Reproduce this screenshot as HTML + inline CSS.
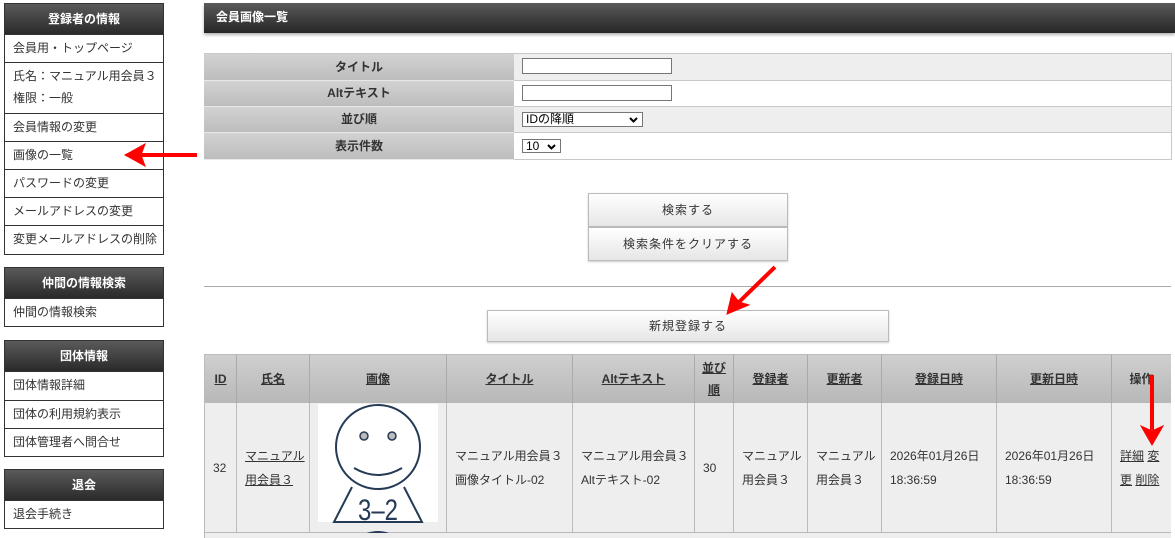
<!DOCTYPE html>
<html><head><meta charset="utf-8"><style>
*{box-sizing:border-box;margin:0;padding:0}
html,body{width:1175px;height:538px;overflow:hidden}
body{background:#fff;font-family:"Liberation Sans","Noto Sans CJK JP",sans-serif;font-size:12px;color:#333;position:relative}
.a{position:absolute}
.sh{position:absolute;left:4px;width:160px;background:linear-gradient(#5a5a5a,#2a2a2a);color:#fff;font-weight:bold;text-align:center;border:1px solid #333}
.si{position:absolute;left:4px;width:160px;border:1px solid #333;border-top:none;background:#fff;padding-left:8px}
.lab{position:absolute;left:204px;width:310px;background:linear-gradient(#d2d2d2,#bdbdbd);font-weight:bold;text-align:center;border-bottom:1px solid #e8e8e8}
.val{position:absolute;left:514px;width:658px;border:1px solid #c8c8c8;border-left:none;border-top:none}
.inp{position:absolute;background:#fff;border:1px solid #767676;height:16px}
.btn{position:absolute;background:linear-gradient(#fff,#e6e6e6);border:1px solid #bbb;text-align:center;letter-spacing:1px;box-shadow:0 1px 2px rgba(0,0,0,.2)}
.th{position:absolute;top:355px;height:48px;background:linear-gradient(#cfcfcf,#b8b8b8);border-right:1px solid #aaa;font-weight:bold;text-align:center;text-decoration:underline;line-height:48px}
.td{position:absolute;top:403px;height:130px;background:#eee;border-right:1px solid #bbb;border-bottom:1px solid #bbb;padding-left:8px;display:flex;align-items:center;line-height:24px}
u{text-decoration:underline}
</style></head><body>
<div class="sh" style="top:3px;height:32px;line-height:30px">登録者の情報</div>
<div class="si" style="top:35px;height:28px;line-height:27px">会員用・トップページ</div>
<div class="si" style="top:63px;height:51px;line-height:22px;padding-top:2px">氏名：マニュアル用会員３<br>権限：一般</div>
<div class="si" style="top:114px;height:28px;line-height:27px">会員情報の変更</div>
<div class="si" style="top:142px;height:28px;line-height:27px">画像の一覧</div>
<div class="si" style="top:170px;height:28px;line-height:27px">パスワードの変更</div>
<div class="si" style="top:198px;height:28px;line-height:27px">メールアドレスの変更</div>
<div class="si" style="top:226px;height:29px;line-height:27px">変更メールアドレスの削除</div>
<div class="sh" style="top:267px;height:32px;line-height:30px">仲間の情報検索</div>
<div class="si" style="top:299px;height:28px;line-height:27px">仲間の情報検索</div>
<div class="sh" style="top:340px;height:32px;line-height:30px">団体情報</div>
<div class="si" style="top:372px;height:29px;line-height:27px">団体情報詳細</div>
<div class="si" style="top:401px;height:28px;line-height:27px">団体の利用規約表示</div>
<div class="si" style="top:429px;height:28px;line-height:27px">団体管理者へ問合せ</div>
<div class="sh" style="top:469px;height:32px;line-height:30px">退会</div>
<div class="si" style="top:501px;height:28px;line-height:27px">退会手続き</div>

<div class="a" style="left:204px;top:3px;width:971px;height:30px;background:linear-gradient(#5a5a5a,#262626);color:#fff;font-weight:bold;padding-left:12px;line-height:28px;box-shadow:0 2px 3px rgba(0,0,0,.3)">会員画像一覧</div>

<div class="a" style="left:204px;top:53px;width:968px;height:1px;background:#c8c8c8"></div>
<div class="lab" style="top:54px;height:27px;line-height:26px">タイトル</div>
<div class="val" style="top:54px;height:27px;background:#eee"></div>
<div class="lab" style="top:81px;height:26px;line-height:25px">Altテキスト</div>
<div class="val" style="top:81px;height:26px;background:#fff"></div>
<div class="lab" style="top:107px;height:26px;line-height:25px">並び順</div>
<div class="val" style="top:107px;height:26px;background:#eee"></div>
<div class="lab" style="top:133px;height:27px;line-height:26px">表示件数</div>
<div class="val" style="top:133px;height:27px;background:#fff"></div>
<div class="inp" style="left:522px;top:58px;width:150px"></div>
<div class="inp" style="left:522px;top:85px;width:150px"></div>
<div class="inp" style="left:522px;top:112px;width:121px;height:15px;line-height:13px;padding-left:3px;color:#000">IDの降順<svg class="a" style="right:4px;top:4px" width="9" height="6"><path d="M1 1L4.5 4.5L8 1" stroke="#000" stroke-width="2" fill="none"/></svg></div>
<div class="inp" style="left:522px;top:139px;width:39px;height:14px;line-height:12px;padding-left:3px;color:#000">10<svg class="a" style="right:4px;top:4px" width="9" height="6"><path d="M1 1L4.5 4.5L8 1" stroke="#000" stroke-width="2" fill="none"/></svg></div>

<div class="btn" style="left:588px;top:193px;width:200px;height:34px;line-height:33px">検索する</div>
<div class="btn" style="left:588px;top:227px;width:200px;height:34px;line-height:33px">検索条件をクリアする</div>
<div class="a" style="left:204px;top:286px;width:967px;height:1px;background:#aaa"></div>
<div class="btn" style="left:487px;top:310px;width:402px;height:32px;line-height:31px">新規登録する</div>

<div class="a" style="left:204px;top:354px;width:967px;height:184px;border:1px solid #bbb;border-bottom:none"></div>
<div class="th" style="left:205px;width:32px">ID</div>
<div class="th" style="left:237px;width:73px">氏名</div>
<div class="th" style="left:310px;width:137px">画像</div>
<div class="th" style="left:447px;width:126px">タイトル</div>
<div class="th" style="left:573px;width:122px">Altテキスト</div>
<div class="th" style="left:695px;width:39px;line-height:22px;padding-top:2px">並び<br>順</div>
<div class="th" style="left:734px;width:74px">登録者</div>
<div class="th" style="left:808px;width:74px">更新者</div>
<div class="th" style="left:882px;width:115px">登録日時</div>
<div class="th" style="left:997px;width:115px">更新日時</div>
<div class="th" style="left:1112px;width:59px;text-decoration:none;border-right:none">操作</div>

<div class="td" style="left:205px;width:32px">32</div>
<div class="td" style="left:237px;width:73px"><u>マニュアル<br>用会員３</u></div>
<div class="td" style="left:310px;width:137px;padding:0"></div>
<div class="td" style="left:447px;width:126px">マニュアル用会員３<br>画像タイトル-02</div>
<div class="td" style="left:573px;width:122px">マニュアル用会員３<br>Altテキスト-02</div>
<div class="td" style="left:695px;width:39px">30</div>
<div class="td" style="left:734px;width:74px">マニュアル<br>用会員３</div>
<div class="td" style="left:808px;width:74px">マニュアル<br>用会員３</div>
<div class="td" style="left:882px;width:115px">2026年01月26日<br>18:36:59</div>
<div class="td" style="left:997px;width:115px">2026年01月26日<br>18:36:59</div>
<div class="td" style="left:1112px;width:59px;border-right:none"><span><u>詳細</u> <u>変<br>更</u> <u>削除</u></span></div>

<svg class="a" style="left:318px;top:404px" width="120" height="134" viewBox="0 0 120 134">
<rect width="120" height="118" fill="#fff"/>
<circle cx="60" cy="43" r="42" fill="#fff" stroke="#253a55" stroke-width="2"/>
<circle cx="46" cy="32" r="4" fill="#bbb" stroke="#253a55" stroke-width="1.5"/>
<circle cx="74" cy="32" r="4" fill="#bbb" stroke="#253a55" stroke-width="1.5"/>
<path d="M36 64Q60 78 84 64" stroke="#253a55" stroke-width="2" fill="none"/>
<path d="M34 83L16 118H104L86 83" stroke="#253a55" stroke-width="2" fill="none"/>
<text x="60" y="116" text-anchor="middle" font-family="Liberation Sans Narrow,Liberation Sans" font-size="30" fill="#253a55" transform="translate(60 0) scale(0.8 1) translate(-60 0)">3–2</text>
<circle cx="60" cy="158" r="30" fill="none" stroke="#253a55" stroke-width="2"/>
</svg>
<div class="a" style="left:205px;top:533px;width:966px;height:5px;background:#eee"></div>

<svg class="a" style="left:0;top:0" width="1175" height="538">
<g fill="#f00" stroke="#f00">
<line x1="197" y1="155" x2="140" y2="155" stroke-width="4"/>
<path d="M125 155L145 144L141 155L145 166Z"/>
<line x1="775" y1="267" x2="738" y2="303" stroke-width="4"/>
<path d="M727 314L732 293L739 302L749 305Z"/>
<line x1="1152" y1="375" x2="1152" y2="430" stroke-width="4"/>
<path d="M1152 445L1141 426L1152 431L1163 426Z"/>
</g>
</svg>
</body></html>
